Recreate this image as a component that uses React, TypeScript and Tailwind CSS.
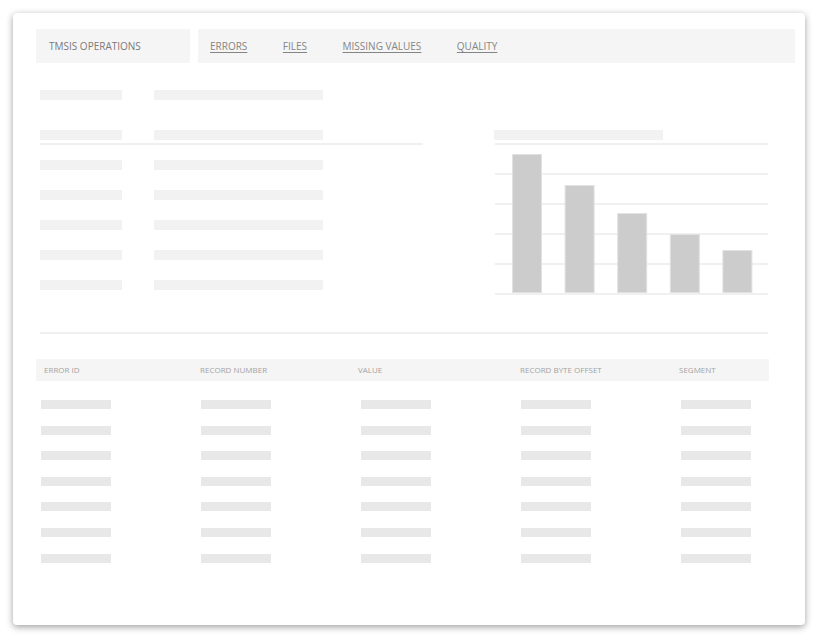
const NAV_LINKS = ['ERRORS', 'FILES', 'MISSING VALUES', 'QUALITY']
const COLUMNS = [
  { label: 'ERROR ID', pad: 'pl-[8px]' },
  { label: 'RECORD NUMBER', pad: 'pl-[4px]' },
  { label: 'VALUE', pad: 'pl-[2px]' },
  { label: 'RECORD BYTE OFFSET', pad: 'pl-[4px]' },
  { label: 'SEGMENT', pad: 'pl-[3px]' },
]
const BARS = [11, 42, 70, 91, 107]

function SkeletonRow() {
  return (
    <div className="flex gap-[32px]">
      <div className="h-[10px] w-[82px] bg-[#f2f2f2]" />
      <div className="h-[10px] w-[169px] bg-[#f2f2f2]" />
    </div>
  )
}

function BarChart() {
  return (
    <svg width="274" height="152" viewBox="0 0 274 152">
      {[0, 30, 60, 90, 120, 150].map((y) => (
        <rect key={y} x="1" y={y} width="273" height="2" fill="#f0f0f0" />
      ))}
      {BARS.map((top, i) => (
        <rect
          key={i}
          x={18.5 + i * 52.6}
          y={top + 0.5}
          width="29"
          height={149 - top}
          fill="#cccccc"
          stroke="#e2e2e2"
          strokeWidth="1"
        />
      ))}
    </svg>
  )
}

export default function App() {
  return (
    <div
      className="w-[822px] h-[642px] bg-white pt-[13px] pl-[13px]"
      style={{ fontFamily: '"Open Sans", "Liberation Sans", sans-serif' }}
    >
      <div className="w-[792px] h-[612px] bg-white rounded-[4px] shadow-[0_2px_7px_rgba(0,0,0,0.38)] pt-[16px] pl-[23px]">
        {/* Top navigation */}
        <div className="flex gap-[8px] h-[34px]">
          <div className="w-[154px] bg-[#f5f5f5] flex items-center pl-[13px] text-[10px] text-[#7a7a7a]">
            TMSIS OPERATIONS
          </div>
          <div className="w-[597px] bg-[#f5f5f5] flex items-center pl-[12px] gap-[35.5px]">
            {NAV_LINKS.map((link) => (
              <a key={link} className="text-[10px] text-[#858585] underline underline-offset-2">
                {link}
              </a>
            ))}
          </div>
        </div>

        {/* Summary + chart */}
        <div className="flex items-start mt-[27px] ml-[4px]">
          <div className="w-[383px] flex flex-col">
            <SkeletonRow />
            <div className="mt-[30px]">
              <SkeletonRow />
            </div>
            <div className="mt-[3px] h-[2px] w-[383px] bg-[#f0f0f0]" />
            <div className="mt-[15px] flex flex-col gap-[20px]">
              {[0, 1, 2, 3, 4].map((i) => (
                <SkeletonRow key={i} />
              ))}
            </div>
          </div>
          <div className="ml-[71px] mt-[40px] flex flex-col">
            <div className="h-[10px] w-[169px] bg-[#f2f2f2]" />
            <div className="mt-[3px]">
              <BarChart />
            </div>
          </div>
        </div>

        <div className="mt-[37px] ml-[4px] h-[2px] w-[728px] bg-[#f0f0f0]" />

        {/* Errors table */}
        <div className="mt-[25px] w-[733px]">
          <div className="grid grid-cols-[160px_160px_160px_160px_93px] h-[22px] bg-[#f5f5f5] items-center">
            {COLUMNS.map((col) => (
              <span key={col.label} className={`text-[8px] text-[#a3a3a3] ${col.pad}`}>
                {col.label}
              </span>
            ))}
          </div>
          <div className="mt-[19px] flex flex-col gap-[16.6px]">
            {[0, 1, 2, 3, 4, 5, 6].map((r) => (
              <div key={r} className="grid grid-cols-[160px_160px_160px_160px_93px]">
                {COLUMNS.map((col) => (
                  <div key={col.label} className="pl-[5px]">
                    <div className="h-[9px] w-[70px] bg-[#e8e8e8]" />
                  </div>
                ))}
              </div>
            ))}
          </div>
        </div>
      </div>
    </div>
  )
}
